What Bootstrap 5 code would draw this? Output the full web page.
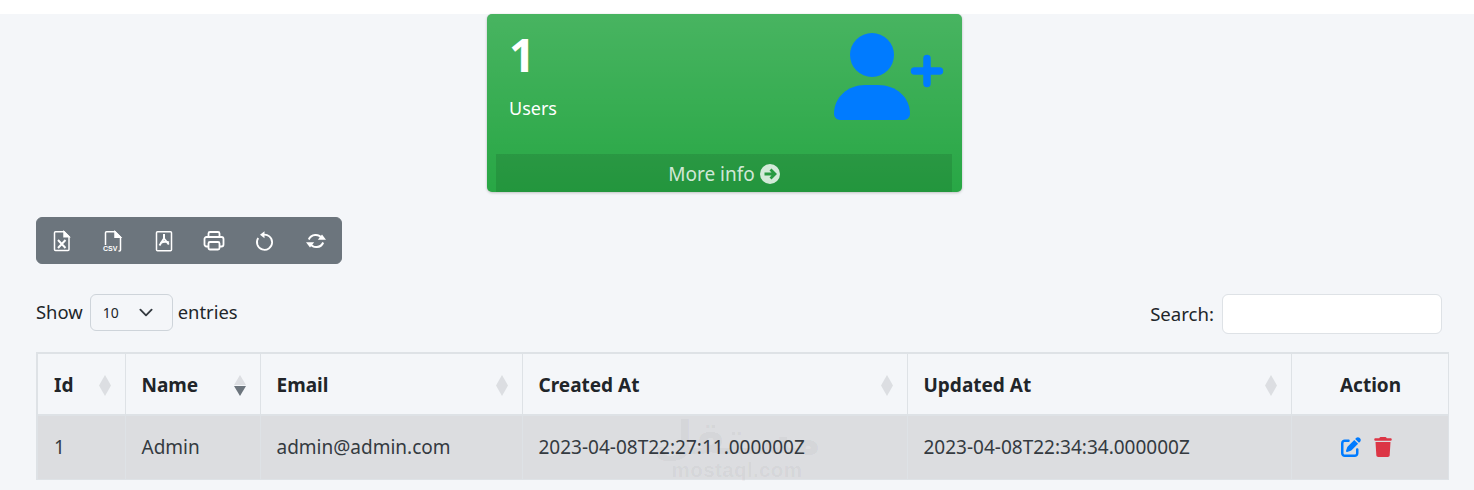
<!DOCTYPE html>
<html lang="en"><head><meta charset="utf-8"><title>Users</title>
<link href="https://cdn.jsdelivr.net/npm/bootstrap@5.3.0/dist/css/bootstrap.min.css" rel="stylesheet">
<style>
html,body{height:490px;overflow:hidden}
body{background:#f4f6f9;font-family:"Noto Sans","Open Sans",sans-serif;font-size:19px;color:#212529}
.top-band{height:14px;background:#fff}
.stat-box{margin-left:487px;width:475px;height:178px;background-color:#28a745;border-radius:5px;box-shadow:0 0 1px rgba(0,0,0,.13),0 1px 3px rgba(0,0,0,.2);color:#fff;position:relative;overflow:hidden}
.stat-num{font-size:46px;font-weight:700;line-height:1;margin:0;padding:17px 0 0 22px;height:81px}
.stat-label{margin:0;padding-left:22px;line-height:26px;height:59px;font-size:18px}
.stat-foot{margin:0 10px 0 9px;height:38px;padding-top:1px;gap:5px;background:rgba(0,0,0,.1);color:rgba(255,255,255,.8);text-decoration:none;line-height:38px}
.stat-ico{position:absolute;left:344px;top:17px}
.tool-group{margin:25px 0 0 36px;width:306px;height:47px}
.tool-group .btn{width:51px;padding:0;background:#6c757d;border-color:#6c757d;display:flex;align-items:center;justify-content:center}
.dt-top{margin:30px 32px 0 36px;height:58px;line-height:1}
.len-sel{width:83px;height:37px;font-size:14px;background-color:transparent;padding:0 12px;border-color:#ced4da;margin:0 5px 0 7px;background-image:url("data:image/svg+xml,%3csvg xmlns='http://www.w3.org/2000/svg' viewBox='0 0 16 16'%3e%3cpath fill='none' stroke='%23343a40' stroke-linecap='round' stroke-linejoin='round' stroke-width='2' d='m2 5 6 6 6-6'/%3e%3c/svg%3e");background-position:right 16px center;background-size:20px 15px}
.lab-show{font-size:18.400px}
.lab-search{padding-top:1px;font-size:18.600px}
.search-box{width:220px;height:40px;margin-left:8px;margin-top:-1px}
.dt-wrap{position:relative;margin:0 0 0 36px;width:1411px}
.dt{table-layout:fixed;width:1411px;margin:0;border-color:#dee2e6;--bs-table-bg:transparent}
.dt th,.dt td{padding:0 14px 0 16px;vertical-align:middle;border-color:#dee2e6}
.dt thead tr{height:62px}
.dt thead th{border-bottom-width:2px;border-top-width:2px;position:relative;padding-top:2px}
.dt tbody tr{height:64px}
.dt tbody td{background:#dcdde0;color:#343a40;box-shadow:none}
.dt tr>:first-child{border-left-width:2px}
.sort-ico{position:absolute;right:14px;top:21px}
.c-id{width:88px}.c-name{width:135px}.c-email{width:262px}.c-created{width:385px}.c-updated{width:384px}.c-action{width:157px}
.act-row{gap:13px;margin-right:8px}
.wm{position:absolute;left:633px;top:64px;width:136px;color:rgba(0,0,0,.045);font-weight:700;pointer-events:none}
.wm-ar{font-family:"DejaVu Sans",sans-serif;font-size:46px;line-height:44px;white-space:nowrap}
.wm-en{font-family:"Liberation Sans",sans-serif;font-size:20.500px;line-height:20px;letter-spacing:.4px;text-align:center}
.csv-tx{font-family:"Liberation Sans",sans-serif;font-size:7px;font-weight:700;fill:#fff}
</style></head>
<body>
<div class="top-band"></div>
<div class="stat-box bg-gradient d-flex flex-column">
  <p class="stat-num">1</p>
  <p class="stat-label">Users</p>
  <a href="#" class="stat-foot d-flex justify-content-center align-items-center">More info
    <svg width="20" height="20" viewBox="0 0 20 20"><circle cx="10" cy="10" r="10" fill="#fff" fill-opacity=".8"/><path d="M4.500 10H15M10.500 5.500 15 10l-4.500 4.500" fill="none" stroke="#289a41" stroke-width="2.800"/></svg></a>
  <svg class="stat-ico" width="116" height="92" viewBox="0 0 116 92" fill="#007bff">
    <circle cx="41" cy="24" r="22"/>
    <path d="M3 83C3 66 17 54 34 54h13c18 0 32 12 32 29 0 3-3 6-6 6H9c-3 0-6-3-6-6z"/>
    <path d="M96 27.500v25M83.500 40h25" stroke="#007bff" stroke-width="7.500" stroke-linecap="round"/>
  </svg>
</div>

<div class="btn-group tool-group" role="group">
  <button class="btn btn-secondary" aria-label="Excel"><svg width="20" height="22" viewBox="0 0 20 22" fill="none" stroke="#fff" stroke-width="1.500"><path d="M3.500 1.800h8.500l5 5v12.700a1 1 0 0 1-1 1h-12.500a1 1 0 0 1-1-1v-16.700a1 1 0 0 1 1-1z"/><path d="M12 1.800v5h5z" fill="#fff"/><path d="M6 10l7.500 8M13.500 10l-7.500 8" stroke-width="2"/></svg></button>
  <button class="btn btn-secondary" aria-label="CSV"><svg width="22" height="22" viewBox="0 0 22 22" fill="none" stroke="#fff" stroke-width="1.500"><path d="M3.500 15V2.800a1 1 0 0 1 1-1h8.500l5.500 5.500v12.700a1 1 0 0 1-1 1H16.500"/><path d="M13 1.800v5.500h5.500z" fill="#fff"/><text class="csv-tx" x="1" y="20.800" stroke="none">CSV</text></svg></button>
  <button class="btn btn-secondary" aria-label="PDF"><svg width="20" height="22" viewBox="0 0 20 22" fill="none" stroke="#fff" stroke-width="1.500"><rect x="2.500" y="1.800" width="15" height="19" rx="1"/><path d="M10 4v4.500L5.500 15.500M10 8.500l4.800 6M6.500 13c3-1.500 5.500-1.500 8.500-.5" stroke-width="2"/></svg></button>
  <button class="btn btn-secondary" aria-label="Print"><svg width="22" height="22" viewBox="0 0 22 22" fill="none" stroke="#fff" stroke-width="1.800"><path d="M5.500 7V3.500a1.500 1.500 0 0 1 1.500-1.500h8a1.500 1.500 0 0 1 1.500 1.500V7"/><path d="M5.500 16.500H3.500a2 2 0 0 1-2-2V9a2 2 0 0 1 2-2h15a2 2 0 0 1 2 2v5.500a2 2 0 0 1-2 2h-2"/><rect x="5.500" y="12" width="11" height="7.500" rx="1.500"/></svg></button>
  <button class="btn btn-secondary" aria-label="Reset"><svg width="20" height="22" viewBox="0 0 20 22" fill="none" stroke="#fff" stroke-width="1.800"><path d="M7.800 4.800A7.600 7.600 0 1 1 3.200 8"/><path d="M9.500 1.200v7L5 4.700z" fill="#fff" stroke="none"/></svg></button>
  <button class="btn btn-secondary" aria-label="Reload"><svg width="22" height="22" viewBox="0 0 22 22" fill="none" stroke="#fff" stroke-width="2"><path d="M3.800 9.500A7.400 7.400 0 0 1 17 8.500M18.200 12.500A7.400 7.400 0 0 1 5 13.500"/><path d="M12.800 9.800h8.200l-4-5.300zM9.200 12.200H1l4 5.300z" fill="#fff" stroke="none"/></svg></button>
</div>

<div class="dt-top d-flex justify-content-between align-items-start">
  <label class="d-flex align-items-center lab-show">Show <select class="form-select len-sel"><option>10</option></select> entries</label>
  <label class="d-flex align-items-center lab-search">Search: <input class="form-control search-box" type="search"></label>
</div>

<div class="dt-wrap">
<table class="table table-bordered dt">
  <colgroup><col class="c-id"><col class="c-name"><col class="c-email"><col class="c-created"><col class="c-updated"><col class="c-action"></colgroup>
  <thead><tr>
    <th>Id<svg class="sort-ico" width="12" height="21" viewBox="0 0 12 21" fill="#dcdee2"><path d="M6 0l6 10.500-6 10.500-6-10.500z"/></svg></th>
    <th>Name<svg class="sort-ico" width="12" height="21" viewBox="0 0 12 21" fill="#dcdee2"><path d="M6 0l6 10H0z"/><path d="M6 21l6-10H0z" fill="#6c757d"/></svg></th>
    <th>Email<svg class="sort-ico" width="12" height="21" viewBox="0 0 12 21" fill="#dcdee2"><path d="M6 0l6 10.500-6 10.500-6-10.500z"/></svg></th>
    <th>Created At<svg class="sort-ico" width="12" height="21" viewBox="0 0 12 21" fill="#dcdee2"><path d="M6 0l6 10.500-6 10.500-6-10.500z"/></svg></th>
    <th>Updated At<svg class="sort-ico" width="12" height="21" viewBox="0 0 12 21" fill="#dcdee2"><path d="M6 0l6 10.500-6 10.500-6-10.500z"/></svg></th>
    <th class="text-center">Action</th>
  </tr></thead>
  <tbody><tr>
    <td>1</td><td>Admin</td><td>admin@admin.com</td>
    <td>2023-04-08T22:27:11.000000Z</td><td>2023-04-08T22:34:34.000000Z</td>
    <td><div class="d-flex justify-content-center act-row">
      <svg width="20" height="20" viewBox="0 0 512 512" fill="#007bff"><path d="M471.600 21.700c-21.900-21.900-57.300-21.900-79.200 0L362.300 51.700l97.900 97.900 30.100-30.100c21.900-21.900 21.900-57.300 0-79.200L471.600 21.700zm-299.200 220c-6.100 6.100-10.800 13.600-13.500 21.900l-29.600 88.800c-2.900 8.600-.6 18.100 5.800 24.600s15.900 8.700 24.600 5.800l88.800-29.600c8.200-2.700 15.700-7.400 21.900-13.500L437.700 172.300 339.700 74.300 172.400 241.700zM96 64C43 64 0 107 0 160V416c0 53 43 96 96 96H352c53 0 96-43 96-96V320c0-17.700-14.300-32-32-32s-32 14.300-32 32v96c0 17.700-14.300 32-32 32H96c-17.700 0-32-14.300-32-32V160c0-17.700 14.300-32 32-32h96c17.700 0 32-14.300 32-32s-14.300-32-32-32H96z"/></svg>
      <svg width="18" height="20" viewBox="0 0 448 512" fill="#dc3545"><path d="M135.200 17.700L128 32H32C14.300 32 0 46.300 0 64S14.300 96 32 96H416c17.700 0 32-14.300 32-32s-14.300-32-32-32H320l-7.200-14.300C307.400 6.800 296.300 0 284.200 0H163.800c-12.100 0-23.200 6.800-28.600 17.700zM416 128H32L53.200 467c1.600 25.300 22.600 45 47.900 45H346.900c25.300 0 46.300-19.700 47.900-45L416 128z"/></svg>
    </div></td>
  </tr></tbody>
</table>
<div class="wm"><div class="wm-ar d-flex justify-content-center" lang="ar" dir="rtl">مستقل</div><div class="wm-en">mostaql.com</div></div>
</div>
</body></html>
